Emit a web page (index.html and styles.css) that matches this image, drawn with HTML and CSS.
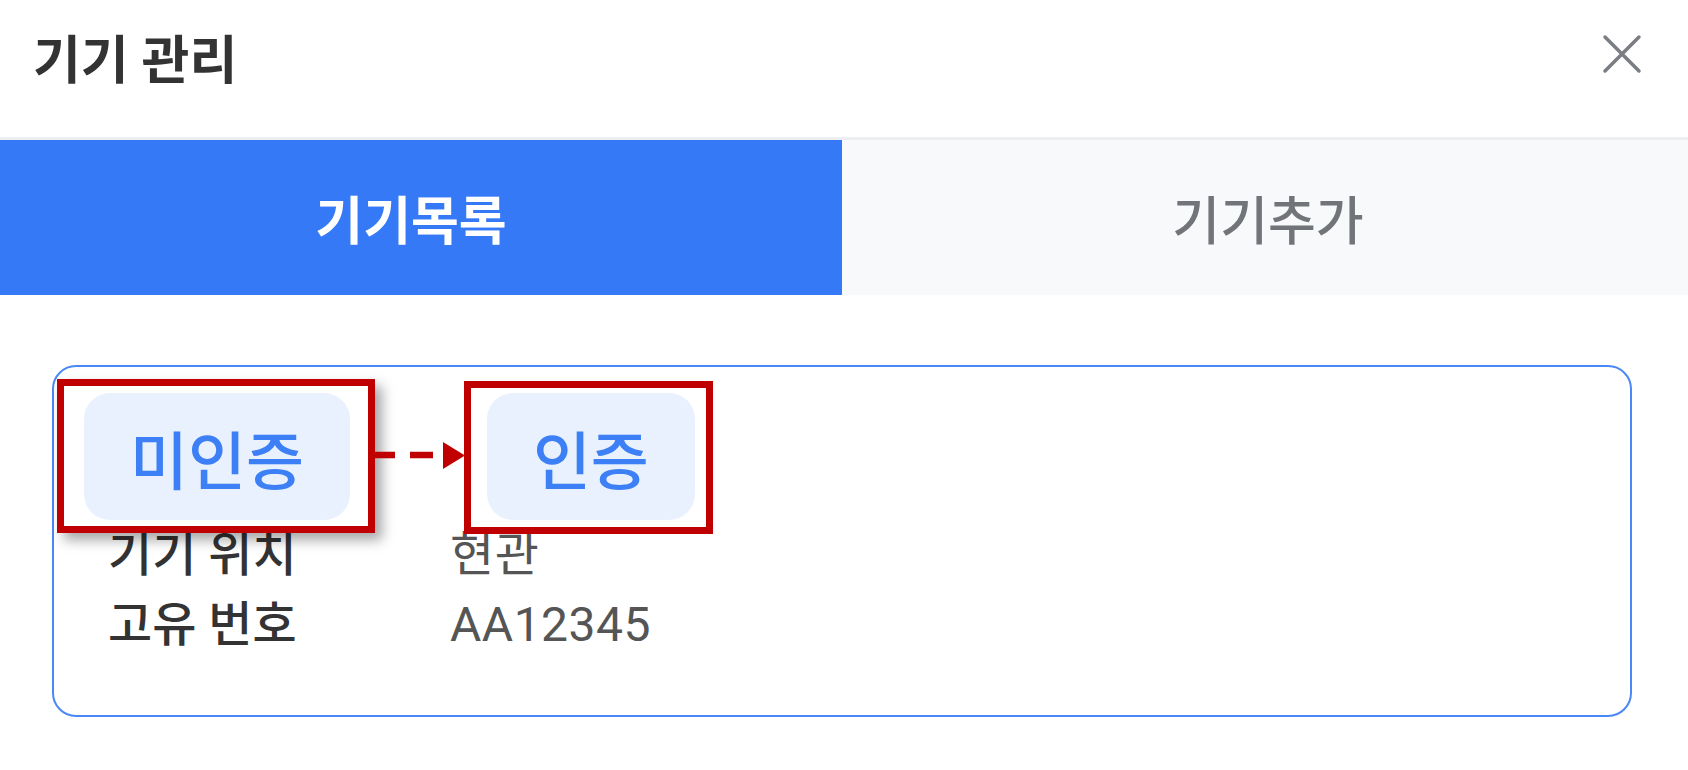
FILE: index.html
```html
<!DOCTYPE html>
<html lang="ko">
<head>
<meta charset="utf-8">
<title>기기 관리</title>
<link rel="stylesheet" href="styles.css">
</head>
<body>
<div class="sheet">
  <header class="sheet-header">
    <h1 class="sheet-title">기기 관리</h1>
    <button class="close-btn" aria-label="닫기">
      <svg viewBox="0 0 40 40" width="40" height="40"><path d="M3 3 L37 37 M37 3 L3 37" stroke="#7a7d82" stroke-width="3.5" stroke-linecap="round" fill="none"/></svg>
    </button>
  </header>
  <nav class="tabs">
    <div class="tab tab-active">기기목록</div>
    <div class="tab">기기추가</div>
  </nav>
  <section class="content">
    <div class="card">
      <div class="badges">
        <span class="badge">미인증</span>
        <span class="badge">인증</span>
      </div>
      <dl class="info">
        <div class="info-row"><dt>기기 위치</dt><dd>현관</dd></div>
        <div class="info-row"><dt>고유 번호</dt><dd>AA12345</dd></div>
      </dl>
      <div class="mark mark-from"></div>
      <div class="mark mark-to"></div>
      <svg class="mark-arrow" viewBox="0 0 92 28" width="92" height="28">
        <path d="M0 13 H20 M35 13 H58" stroke="#c00000" stroke-width="6.5" fill="none"/>
        <polygon points="68,0 90,13.5 68,27" fill="#c00000"/>
      </svg>
    </div>
  </section>
</div>
</body>
</html>
```

FILE: styles.css
```css
* { box-sizing: border-box; }
html, body { margin: 0; padding: 0; background: #ffffff; }
body {
  font-family: Roboto, "Noto Sans CJK KR", sans-serif;
  color: #333333;
  width: 1688px;
  height: 770px;
  overflow: hidden;
}
.sheet { display: flex; flex-direction: column; }
.sheet-header {
  height: 137px;
  display: flex;
  justify-content: space-between;
  align-items: flex-start;
  padding: 31px 46px 0 33px;
}
.sheet-title {
  margin: 0;
  font-size: 52px;
  line-height: 62px;
  font-weight: 700;
  color: #333333;
}
.close-btn {
  margin-top: 3px;
  width: 40px;
  height: 40px;
  padding: 0;
  border: 0;
  background: none;
  display: flex;
}
.tabs {
  display: flex;
  border-top: 3px solid #eceef1;
  height: 158px;
}
.tab {
  width: 50%;
  display: flex;
  align-items: center;
  justify-content: center;
  font-size: 52px;
  font-weight: 500;
  color: #717479;
  background: #f8f9fb;
}
.tab-active {
  width: 842px;
  background: #3579f6;
  color: #ffffff;
  font-weight: 700;
  padding-right: 20px;
}
.tab + .tab { flex: 1; padding-left: 6px; }
.content { padding: 70px 56px 0 52px; }
.card {
  position: relative;
  height: 352px;
  border: 2px solid #4a88f5;
  border-radius: 24px;
  padding: 26px 30px 0;
}
.badges { display: flex; gap: 137px; }
.badge {
  height: 127px;
  padding: 0 46px;
  display: flex;
  align-items: center;
  border-radius: 26px;
  background: #eaf1fe;
  color: #3d80f5;
  font-size: 63px;
  font-weight: 500;
}
.info { margin: 0; padding-left: 24px; }
.info-row {
  display: flex;
  font-size: 48px;
  line-height: 70px;
}
.info dt { width: 342px; font-weight: 500; color: #333333; }
.info dd { margin: 0; color: #555555; letter-spacing: 0.5px; }
.mark {
  position: absolute;
  border: 7px solid #c00000;
}
.mark-from {
  left: 3px; top: 12px; width: 318px; height: 154px;
  box-shadow: 7px 7px 12px rgba(0, 0, 0, 0.35);
}
.mark-to { left: 410px; top: 14px; width: 249px; height: 153px; }
.mark-arrow { position: absolute; left: 321px; top: 75px; }
```
